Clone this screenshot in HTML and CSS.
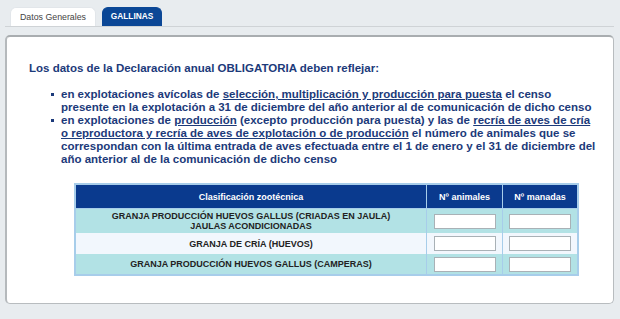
FILE: index.html
```html
<!DOCTYPE html>
<html lang="es">
<head>
<meta charset="utf-8">
<link rel="stylesheet" href="styles.css">
</head>
<body>
<div class="tabs">
  <div class="tab">Datos Generales</div>
  <div class="tab active">GALLINAS</div>
</div>
<div class="panel">
  <p class="lead">Los datos de la Declaración anual OBLIGATORIA deben reflejar:</p>
  <ul class="notes">
    <li>en explotaciones avícolas de <u>selección, multiplicación y producción para puesta</u> el censo presente en la explotación a 31 de diciembre del año anterior al de comunicación de dicho censo</li>
    <li>en explotaciones de <u>producción</u> (excepto producción para puesta) y las de <u>recría de aves de cría o reproductora y recría de aves de explotación o de producción</u> el número de animales que se correspondan con la última entrada de aves efectuada entre el 1 de enero y el 31 de diciembre del año anterior al de la comunicación de dicho censo</li>
  </ul>
  <table class="grid">
    <thead>
      <tr><th class="c1">Clasificación zootécnica</th><th class="c2">Nº animales</th><th class="c3">Nº manadas</th></tr>
    </thead>
    <tbody>
      <tr class="odd r1"><td>GRANJA PRODUCCIÓN HUEVOS GALLUS (CRIADAS EN JAULA)<br>JAULAS ACONDICIONADAS</td><td><input type="text"></td><td><input type="text"></td></tr>
      <tr class="even r2"><td>GRANJA DE CRÍA (HUEVOS)</td><td><input type="text"></td><td><input type="text"></td></tr>
      <tr class="odd r3"><td>GRANJA PRODUCCIÓN HUEVOS GALLUS (CAMPERAS)</td><td><input type="text"></td><td><input type="text"></td></tr>
    </tbody>
  </table>
</div>
</body>
</html>
```
FILE: styles.css
```css
html, body {
  margin: 0;
  padding: 0;
  background: #e8ecef;
  font-family: "Liberation Sans", Arial, sans-serif;
}
.tabs {
  display: flex;
  gap: 6px;
  margin: 0 6px 0 5px;
  padding: 7px 0 0 5px;
  border-bottom: 1px solid #cfd3d6;
  height: 19px;
}
.tab {
  width: 86px;
  height: 19px;
  box-sizing: border-box;
  padding-top: 4px;
  text-align: center;
  background: #fff;
  border-radius: 6px 6px 0 0;
  font-size: 8.8px;
  color: #444;
  border: 1px solid #e2e6ea;
  border-bottom: none;
}
.tab.active {
  width: 60px;
  background: #0b4796;
  color: #fff;
  font-weight: bold;
  font-size: 8.3px;
  border-color: #0b4796;
  padding-top: 3px;
}
.panel {
  margin: 8px 6px 0 5px;
  height: 269px;
  box-sizing: border-box;
  background: #fff;
  border: 1px solid #b8bcbf;
  border-top: 2px solid #a9adb0;
  border-left: 2px solid #b5b9bc;
  border-radius: 5px;
  padding: 25px 0 0 22px;
  color: #1c3a7a;
}
.lead {
  margin: 0;
  font-size: 11.5px;
  line-height: 13px;
  font-weight: bold;
}
.notes {
  margin: 13px 16px 0 0;
  padding-left: 32px;
  list-style: none;
  font-size: 11.5px;
  font-weight: bold;
  line-height: 13px;
}
.notes li {
  position: relative;
}
.notes li::before {
  content: "";
  position: absolute;
  left: -10px;
  top: 5px;
  width: 3px;
  height: 3px;
  background: #1c3a7a;
}
.grid {
  margin: 17px 0 0 45px;
  border-collapse: collapse;
  width: 505px;
  border: 2px solid #a7cdea;
  font-size: 9px;
  font-weight: bold;
}
.grid th {
  background: #0a3a8e;
  color: #fff;
  height: 23px;
  padding: 0;
  border: 1px solid #a7cdea;
  text-align: center;
}
.grid .c1 { width: 350px; }
.grid .c2 { width: 75px; }
.grid td {
  border: 1px solid #a7cdea;
  border-top: none;
  border-bottom: none;
  padding: 0;
  text-align: center;
  color: #222;
  line-height: 10px;
}
.grid tr.odd td { background: #b2e2e5; }
.grid tr.even td { background: #f2f7fd; }
.grid tr.r1 td { height: 24px; }
.grid tr.r2 td { height: 21px; }
.grid tr.r3 td { height: 20px; }
.grid input {
  display: block;
  margin: 0 auto;
  width: 62px;
  height: 15px;
  box-sizing: border-box;
  border: 1px solid #a9b1b6;
  background: #fff;
  padding: 0;
}
```
